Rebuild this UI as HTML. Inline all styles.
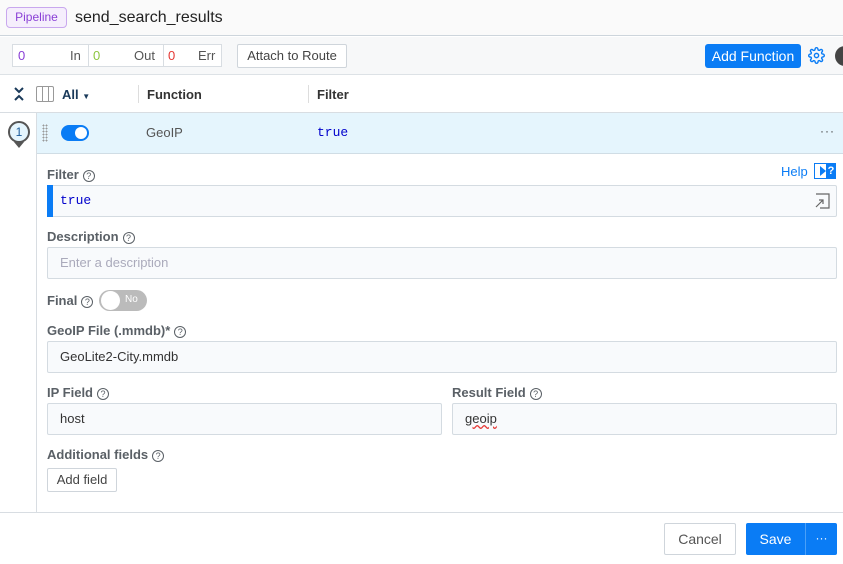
<!DOCTYPE html>
<html><head><meta charset="utf-8"><style>
*{box-sizing:border-box;margin:0;padding:0}
body{width:843px;height:564px;overflow:hidden;background:#fff;font-family:"Liberation Sans",sans-serif;color:#333;position:relative;font-size:13px}
.a{position:absolute}
.lbl{position:absolute;left:47px;font-size:13px;font-weight:bold;color:#5a6066;white-space:nowrap}
.q{display:inline-block;width:12px;height:12px;border:1px solid #5a6066;border-radius:50%;font-size:9px;text-align:center;line-height:10px;font-weight:normal;vertical-align:0px;margin-left:4px}
.inp{position:absolute;background:#f8fafc;border:1px solid #d4dbe1;border-radius:2px;font-size:13px;padding-left:12px;line-height:29px;color:#333}
.btn{position:absolute;border:1px solid #cfd5db;border-radius:2px;background:#fff;text-align:center;color:#444}
</style></head><body>
<div class="a" style="left:0;top:0;width:843px;height:36px;background:#fafafa;border-bottom:1px solid #cdd5dc"></div>
<div class="a" style="left:6px;top:7px;width:61px;height:21px;border:1px solid #c9a8ee;background:#f5eefc;border-radius:4px;color:#8a3fd6;font-size:12px;text-align:center;line-height:19px">Pipeline</div>
<div class="a" style="left:75px;top:9px;font-size:16px;color:#222">send_search_results</div>
<div class="a" style="left:0;top:37px;width:843px;height:38px;background:#f7f8f9;border-bottom:1px solid #dde2e6"></div>
<div class="a" style="left:12px;top:44px;width:210px;height:23px;border:1px solid #d8dde2;background:#fff;font-size:13px;line-height:21px">
<span class="a" style="left:5px;color:#8a3fd6">0</span><span class="a" style="left:57px;color:#555">In</span>
<span class="a" style="left:75px;top:-1px;width:1px;height:23px;background:#d8dde2"></span>
<span class="a" style="left:80px;color:#8cc63f">0</span><span class="a" style="left:121px;color:#555">Out</span>
<span class="a" style="left:150px;top:-1px;width:1px;height:23px;background:#d8dde2"></span>
<span class="a" style="left:155px;color:#e53935">0</span><span class="a" style="left:185px;color:#555">Err</span></div>
<div class="btn" style="left:237px;top:44px;width:110px;height:24px;line-height:22px;font-size:13px">Attach to Route</div>
<div class="a" style="left:705px;top:44px;width:96px;height:24px;background:#0a7cf5;border-radius:3px;color:#fff;font-size:14px;text-align:center;line-height:24px">Add Function</div>
<svg class="a" style="left:808px;top:47px" width="17" height="17" viewBox="0 0 24 24" fill="none" stroke="#0a7cf5" stroke-width="2"><circle cx="12" cy="12" r="3"/><path d="M19.4 15a1.7 1.7 0 0 0 .3 1.8l.1.1a2 2 0 1 1-2.8 2.8l-.1-.1a1.7 1.7 0 0 0-1.8-.3 1.7 1.7 0 0 0-1 1.5V21a2 2 0 1 1-4 0v-.1a1.7 1.7 0 0 0-1.1-1.5 1.7 1.7 0 0 0-1.8.3l-.1.1a2 2 0 1 1-2.8-2.8l.1-.1a1.7 1.7 0 0 0 .3-1.8 1.7 1.7 0 0 0-1.5-1H3a2 2 0 1 1 0-4h.1a1.7 1.7 0 0 0 1.5-1.1 1.7 1.7 0 0 0-.3-1.8l-.1-.1a2 2 0 1 1 2.8-2.8l.1.1a1.7 1.7 0 0 0 1.8.3H9a1.7 1.7 0 0 0 1-1.5V3a2 2 0 1 1 4 0v.1a1.7 1.7 0 0 0 1 1.5 1.7 1.7 0 0 0 1.8-.3l.1-.1a2 2 0 1 1 2.8 2.8l-.1.1a1.7 1.7 0 0 0-.3 1.8V9a1.7 1.7 0 0 0 1.5 1H21a2 2 0 1 1 0 4h-.1a1.7 1.7 0 0 0-1.5 1z"/></svg>
<div class="a" style="left:835px;top:46px;width:20px;height:20px;border-radius:50%;background:#444"></div>
<svg class="a" style="left:13px;top:86px" width="12" height="16" viewBox="0 0 12 16" fill="none" stroke="#1a3a5a" stroke-width="2"><path d="M2 2l4 4 4-4M2 14l4-4 4 4"/></svg>
<div class="a" style="left:36px;top:86px;width:18px;height:16px;border:1px solid #999;border-radius:2px"></div>
<div class="a" style="left:42px;top:87px;width:1px;height:14px;background:#999"></div>
<div class="a" style="left:48px;top:87px;width:1px;height:14px;background:#999"></div>
<div class="a" style="left:62px;top:87px;font-weight:bold;color:#1a3a5a;font-size:13px">All <span style="font-size:8px">▼</span></div>
<div class="a" style="left:138px;top:85px;width:1px;height:18px;background:#ddd"></div>
<div class="a" style="left:147px;top:87px;font-weight:bold;color:#333;font-size:13px">Function</div>
<div class="a" style="left:308px;top:85px;width:1px;height:18px;background:#ddd"></div>
<div class="a" style="left:317px;top:87px;font-weight:bold;color:#333;font-size:13px">Filter</div>
<div class="a" style="left:0;top:112px;width:843px;height:1px;background:#d8dde2"></div>
<div class="a" style="left:37px;top:113px;width:806px;height:41px;background:#e5f5fd;border-bottom:1px solid #d0dde5"></div>
<div class="a" style="left:36px;top:112px;width:1px;height:400px;background:#d8dde2"></div>
<div class="a" style="left:8px;top:121px;width:22px;height:22px;border:2px solid #555;border-radius:50%;background:#e5f5fd;color:#1a5a9a;font-size:12px;text-align:center;line-height:18px">1</div>
<div class="a" style="left:14px;top:142px;width:0;height:0;border-left:5px solid transparent;border-right:5px solid transparent;border-top:6px solid #555"></div>
<div class="a" style="left:42px;top:124px;width:6px;height:18px;background:radial-gradient(circle,#999 0.8px,transparent 1px) 0 0/3px 3px"></div>
<div class="a" style="left:61px;top:125px;width:28px;height:16px;border-radius:8px;background:#0a7cf5"></div>
<div class="a" style="left:75px;top:127px;width:12px;height:12px;border-radius:50%;background:#fff"></div>
<div class="a" style="left:146px;top:125px;color:#555;font-size:13px">GeoIP</div>
<div class="a" style="left:317px;top:125px;color:#0000cc;font-family:'Liberation Mono',monospace;font-size:13px">true</div>
<div class="a" style="left:820px;top:124px;color:#444;font-size:12px;letter-spacing:1px">···</div>
<div class="lbl" style="top:167px">Filter<span class="q">?</span></div>
<div class="a" style="left:781px;top:164px;color:#0a7cf5;font-size:13px">Help</div>
<div class="a" style="left:814px;top:163px;width:22px;height:16px;border:1px solid #0a7cf5;background:#fff"></div>
<div class="a" style="left:820px;top:166px;width:0;height:0;border-top:5px solid transparent;border-bottom:5px solid transparent;border-left:6px solid #0a7cf5"></div>
<div class="a" style="left:826px;top:163px;width:10px;height:16px;background:#0a7cf5;color:#fff;font-size:11px;font-weight:bold;text-align:center;line-height:16px">?</div>
<div class="inp" style="left:47px;top:185px;width:790px;height:32px;padding-left:12px;color:#0000cc;font-family:'Liberation Mono',monospace">true</div>
<div class="a" style="left:47px;top:185px;width:6px;height:32px;background:#0a7cf5"></div>
<svg class="a" style="left:814px;top:193px" width="16" height="16" viewBox="0 0 16 16" fill="none" stroke="#666" stroke-width="1.2"><path d="M2 1h13v14H6M2 14l7-7M5 7h4v4"/></svg>
<div class="lbl" style="top:229px">Description<span class="q">?</span></div>
<div class="inp" style="left:47px;top:247px;width:790px;height:32px;color:#aab;">Enter a description</div>
<div class="lbl" style="top:293px">Final<span class="q">?</span></div>
<div class="a" style="left:99px;top:290px;width:48px;height:21px;border-radius:11px;background:#bbb"></div>
<div class="a" style="left:101px;top:291px;width:19px;height:19px;border-radius:50%;background:#fff"></div>
<div class="a" style="left:125px;top:294px;color:#fff;font-size:10px">No</div>
<div class="lbl" style="top:323px">GeoIP File (.mmdb)*<span class="q">?</span></div>
<div class="inp" style="left:47px;top:341px;width:790px;height:32px">GeoLite2-City.mmdb</div>
<div class="lbl" style="top:385px">IP Field<span class="q">?</span></div>
<div class="inp" style="left:47px;top:403px;width:395px;height:32px">host</div>
<div class="lbl" style="top:385px;left:452px">Result Field<span class="q">?</span></div>
<div class="inp" style="left:452px;top:403px;width:385px;height:32px"><span style="text-decoration:underline wavy #e53935">geoip</span></div>
<div class="lbl" style="top:447px">Additional fields<span class="q">?</span></div>
<div class="btn" style="left:47px;top:468px;width:70px;height:24px;line-height:22px;font-size:13px">Add field</div>
<div class="a" style="left:0;top:512px;width:843px;height:1px;background:#d8dde2"></div>
<div class="btn" style="left:664px;top:523px;width:72px;height:32px;line-height:30px;font-size:14px;color:#555">Cancel</div>
<div class="a" style="left:746px;top:523px;width:91px;height:32px;background:#0a7cf5;border-radius:2px"></div>
<div class="a" style="left:746px;top:523px;width:59px;height:32px;color:#fff;font-size:14px;text-align:center;line-height:32px">Save</div>
<div class="a" style="left:805px;top:523px;width:1px;height:32px;background:#4aa0f8"></div>
<div class="a" style="left:806px;top:523px;width:31px;height:32px;color:#fff;font-size:12px;text-align:center;line-height:30px">···</div>
</body></html>
